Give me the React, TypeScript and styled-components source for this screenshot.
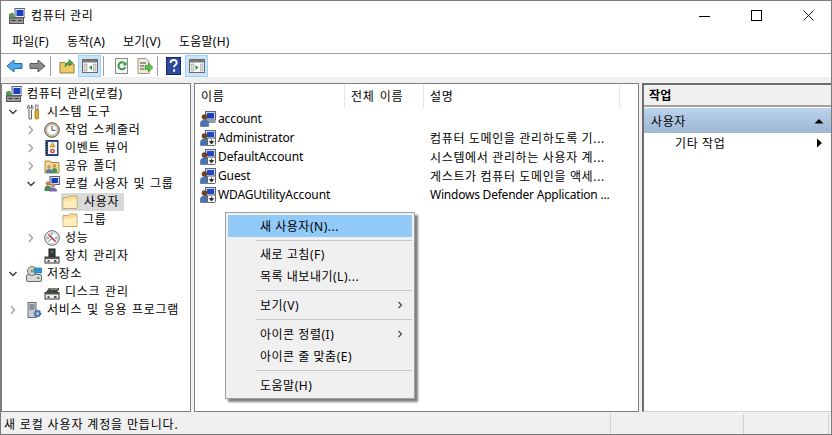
import React from "react";
import styled, { createGlobalStyle } from "styled-components";

const Global = createGlobalStyle`
  html, body { margin: 0; padding: 0; background: #fff; }
  body { font-family: "Noto Sans", "Noto Sans CJK KR", sans-serif; font-size: 12px; color: #000; overflow: hidden; }
  * { box-sizing: border-box; }
`;

const Win = styled.div`
  position: relative; width: 832px; height: 435px; border: 1px solid #7a7a7a; background: #f0f0f0;
  display: flex; flex-direction: column; overflow: hidden;
`;
const TitleBar = styled.div`
  height: 29px; background: #fff; display: flex; align-items: center; padding-left: 8px; gap: 6px; flex: none;
`;
const TitleText = styled.span`font-size: 12px; letter-spacing: .7px; flex: 1; padding-bottom: 2px;`;
const WinBtn = styled.div`
  width: 46px; height: 29px; display: flex; align-items: center; justify-content: center;
`;
const MenuBar = styled.div`
  height: 24px; background: #fff; display: flex; align-items: center; padding-left: 3px; border-bottom: 1px solid #a0a0a0; flex: none;
`;
const MenuLabel = styled.span<{ $w: number }>`width: ${p => p.$w}px; padding-left: 8px; padding-bottom: 2px; font-size: 12px; letter-spacing: .25px;`;
const Toolbar = styled.div`
  height: 23px; background: #fff; display: flex; align-items: center; padding-left: 2px; flex: none;
`;
const ToolBtn = styled.div<{ $w?: number; $on?: boolean }>`
  width: ${p => p.$w ?? 23}px; height: 22px; display: flex; align-items: center; justify-content: center; flex: none;
  background: ${p => (p.$on ? "#cce4f7" : "transparent")};
  border: 1px solid ${p => (p.$on ? "#99d1ff" : "transparent")};
`;
const ToolSep = styled.div<{ $l: number; $r: number }>`
  width: 1px; height: 20px; background: #a0a0a0; flex: none; margin: 0 ${p => p.$r}px 0 ${p => p.$l}px;
`;
const Content = styled.div`
  flex: 1; display: flex; padding-top: 6px; background: #f0f0f0; min-height: 0;
`;
const Panel = styled.div<{ $w: number }>`
  width: ${p => p.$w}px; background: #fff; border: 1px solid #7f7f7f; flex: none; overflow: hidden;
`;
const CenterPanel = styled(Panel)`margin-left: 3px;`;
const TreeList = styled.div`padding-top: 1px; display: flex; flex-direction: column;`;
const Row = styled.div`height: 18px; display: flex; align-items: center; padding-left: 4px; white-space: nowrap; letter-spacing: .72px; word-spacing: 1px;`;
const Indent = styled.div<{ $w: number }>`
  width: ${p => p.$w}px; height: 16px; flex: none; display: flex; align-items: center; justify-content: flex-end; padding-right: ${p => (p.$w ? 8 : 0)}px;
`;
const TreeLabel = styled.span<{ $sel?: boolean; $root?: boolean }>`
  margin-left: ${p => (p.$sel ? "0" : p.$root ? "5px" : "5px")};
  padding: ${p => (p.$sel ? "0 5px 0 6px" : "0")};
  line-height: 18px; height: 18px;
  background: ${p => (p.$sel ? "#d9d9d9" : "transparent")};
`;
const SelWrap = styled.div`display: flex; align-items: center; background: #d9d9d9; height: 18px; margin-left: -1px; padding-left: 1px;`;
const Header = styled.div`height: 24px; display: flex; align-items: center; background: #fff; letter-spacing: .7px; word-spacing: 1.5px;`;
const HCol = styled.div<{ $w: number; $line?: boolean }>`
  width: ${p => p.$w}px; height: 24px; padding-left: 6px; display: flex; align-items: center; flex: none;
  border-right: ${p => (p.$line ? "1px solid #e5e5e5" : "0")};
`;
const ListRows = styled.div`padding-top: 1px;`;
const LRow = styled.div`height: 19px; display: flex; align-items: center; white-space: nowrap;`;
const NameCell = styled.div`width: 235px; display: flex; align-items: center; gap: 2px; padding-left: 5px; flex: none; letter-spacing: -.12px;`;
const DescCell = styled.div<{ $latin?: boolean }>`letter-spacing: ${p => (p.$latin ? "-.22px" : ".65px")};`;
const ActHead = styled.div`
  height: 22px; background: #f0f0f0; border-bottom: 2px solid #a0a0a0; font-weight: 700; display: flex; align-items: center; padding-left: 5px; letter-spacing: .2px;
`;
const ActPanel = styled(Panel)`
  border-width: 2px 1px 1px 2px; border-color: #6d6d6d #a0a0a0 #d0d0d0 #6d6d6d; margin-left: 3px;
`;
const ActGroup = styled.div`
  height: 25px; background: linear-gradient(#bbd2ea, #9cb6d4); display: flex; align-items: center; justify-content: space-between;
  padding: 0 7px 0 7px; margin-top: 1px; letter-spacing: .6px;
`;
const ActRow = styled.div`
  height: 20px; display: flex; align-items: center; justify-content: space-between; padding: 0 7px 0 31px; letter-spacing: .6px;
`;
const Status = styled.div`
  height: 22px; flex: none; display: flex; align-items: center; background: #f0f0f0; padding-top: 1px; letter-spacing: .85px;
`;
const StatusCell = styled.div<{ $w: number; $line?: boolean }>`
  width: ${p => p.$w}px; height: 20px; padding-left: 3px; display: flex; align-items: center; flex: none;
  border-right: ${p => (p.$line ? "1px solid #d0d0d0" : "0")};
`;
const Ctx = styled.div`
  position: absolute; left: 224px; top: 211px; width: 190px; background: #f0f0f0; border: 1px solid #a0a0a0;
  padding: 2px; box-shadow: 3px 3px 2px #808080; letter-spacing: .52px;
`;
const CtxItem = styled.div<{ $on?: boolean }>`
  height: 22px; display: flex; align-items: center; justify-content: space-between; padding: 0 9px 1px 32px;
  background: ${p => (p.$on ? "#91c9f7" : "transparent")};
`;
const CtxSep = styled.div<{ $h?: number }>`
  height: ${p => p.$h ?? 7}px; display: flex; align-items: center; padding-left: 28px;
  &::after { content: ""; flex: 1; height: 1px; background: #c8c8c8; }
`;

/* ---------- drawings ---------- */
const S: React.FC<{ w?: number; h?: number; children: React.ReactNode }> = ({ w = 16, h = 16, children }) => (
  <svg width={w} height={h} viewBox={`0 0 ${w} ${h}`} style={{ flex: "none", display: "block" }}>{children}</svg>
);

const Computer = () => (
  <S>
    <rect x="6" y="0.500" width="10" height="9" fill="#e6eaf0" stroke="#5a6478" />
    <rect x="7.500" y="2" width="7" height="6" fill="#1c3fc0" />
    <path d="M0.500 6l3.500-1 1.500 5H0.500z" fill="#46a24a" stroke="#3a6a40" strokeWidth=".5" />
    <rect x="0.500" y="10" width="14" height="5.500" fill="#9a9a9a" stroke="#555" />
    <path d="M2.500 12.500h4M9 12.500h3.500" stroke="#333" />
  </S>
);
const Tools = () => (
  <S>
    <path d="M3 1c-2 1-2 4 0 5v9h2.500V6c2-1 2-4 0-5v3H3z" fill="#f2f2f2" stroke="#666" />
    <rect x="9.500" y="1" width="2.500" height="5" fill="#dcdcdc" stroke="#666" strokeWidth=".7" />
    <rect x="9" y="6" width="3.500" height="9" rx="1" fill="#e4b31c" stroke="#8a6a10" strokeWidth=".7" />
  </S>
);
const Clock = () => (
  <S>
    <circle cx="8" cy="8" r="7.300" fill="#d8c9a0" stroke="#555" />
    <circle cx="8" cy="8" r="5.300" fill="#fff" stroke="#999" strokeWidth=".6" />
    <path d="M8 4v4.300h3.500" stroke="#444" strokeWidth="1" fill="none" />
  </S>
);
const LogBook = () => (
  <S>
    <rect x="2" y="0.500" width="12" height="15" fill="#2f5790" stroke="#1f3a66" />
    <rect x="4" y="2" width="9" height="12" fill="#f4f4f4" />
    <path d="M1 3h3M1 5.500h3M1 8h3M1 10.500h3M1 13h3" stroke="#333" />
    <path d="M8.500 2.500l2.500 4.500H6z" fill="#f0c020" stroke="#8a6a10" strokeWidth=".5" />
    <circle cx="8.500" cy="11" r="2.300" fill="#c8323c" />
    <circle cx="8.500" cy="11" r=".9" fill="#fff" />
  </S>
);
const SharedFolder = () => (
  <S>
    <path d="M1 3h5l1 1.500h8V15H1z" fill="#f2d98c" stroke="#a88a40" />
    <circle cx="5" cy="9" r="1.800" fill="#c89060" />
    <path d="M2 15v-2c0-1 1.500-2 3-2s3 1 3 2v2z" fill="#4a7ab8" />
    <circle cx="10.500" cy="8" r="1.800" fill="#c89060" />
    <path d="M8 15v-3c0-1 1-2 2.500-2s2.500 1 2.500 2v3z" fill="#3f9a58" />
  </S>
);
const Users = () => (
  <S>
    <rect x="6" y="0.500" width="9.500" height="8" fill="#dfe5ee" stroke="#5a6478" />
    <rect x="7.500" y="2" width="6.500" height="5" fill="#1c3fc0" />
    <circle cx="4" cy="7.500" r="2.300" fill="#b8824e" />
    <path d="M0.500 15v-2.500c0-1.500 1.500-2.700 3.500-2.700s3.500 1.200 3.500 2.700V15z" fill="#4f8a50" />
    <circle cx="9" cy="9.500" r="2.200" fill="#c89060" />
    <path d="M5 15.500V14c0-1.300 1.800-2.300 4-2.300s4 1 4 2.300v1.500z" fill="#7a6ab0" />
  </S>
);
const Folder = () => (
  <S>
    <path d="M1 3.500V14.500h14V2H7.500L6 3.500z" fill="#f8dc94" stroke="#c0a870" />
    <path d="M1.500 6.500h8L11 5h3.500V14h-13z" fill="#fdeebc" />
  </S>
);
const Perf = () => (
  <S>
    <circle cx="8" cy="8" r="7.300" fill="#f4f4f4" stroke="#666" />
    <circle cx="8" cy="8" r="5.500" fill="#fff" stroke="#aaa" strokeWidth=".6" />
    <path d="M4.500 4.500l7 7" stroke="#c8282c" strokeWidth="1.600" />
    <path d="M8 3v2M3 8h2M13 8h-2" stroke="#2f6ab0" strokeWidth="1" />
    <path d="M4.500 11l3-2" stroke="#2f8a50" strokeWidth="1" />
  </S>
);
const Device = () => (
  <S>
    <rect x="5" y="1" width="6" height="8" fill="#3a3a3a" stroke="#222" />
    <rect x="7.500" y="3" width="1.500" height="1.500" fill="#4ecb60" />
    <rect x="1" y="9" width="14" height="6" fill="#f0f0f0" stroke="#333" />
    <rect x="1" y="9" width="14" height="2" fill="#555" />
    <path d="M3.500 13h2M10 13h2.500" stroke="#222" strokeWidth="1.400" />
  </S>
);
const Storage = () => (
  <S>
    <rect x="0.500" y="8.500" width="15" height="7" rx="1.500" fill="#d8dcd8" stroke="#6a6a6a" />
    <rect x="11" y="11" width="2.500" height="2" fill="#5a9a5a" />
    <circle cx="6" cy="5" r="4.500" fill="#cfd4d0" stroke="#6a6a6a" />
    <circle cx="6" cy="5" r="1.500" fill="#8a9a50" />
    <rect x="8" y="2" width="8" height="5" rx="1" fill="#2f95d0" stroke="#1c6a98" strokeWidth=".6" />
  </S>
);
const Disk = () => (
  <S>
    <path d="M2 8l3-4h10v2l-2 2z" fill="#444" />
    <path d="M6 5h8" stroke="#9ed09a" />
    <rect x="1" y="8.500" width="14" height="6.500" fill="#f0f0f0" stroke="#333" />
    <rect x="1" y="8.500" width="14" height="2" fill="#555" />
    <path d="M3.500 13h2M10 13h2.500" stroke="#222" strokeWidth="1.400" />
  </S>
);
const Services = () => (
  <S>
    <rect x="2" y="0.500" width="8" height="15" fill="#c8ccd4" stroke="#6a7080" />
    <path d="M3.500 3h5M3.500 5h5M3.500 7h5" stroke="#4a5060" />
    <circle cx="11.500" cy="11.500" r="3" fill="#5f8cc8" stroke="#3a5f98" strokeDasharray="1.500 .7" strokeWidth="1.500" />
    <circle cx="11.500" cy="11.500" r="1" fill="#fff" />
  </S>
);
const UserPlain = () => (
  <S>
    <rect x="5.500" y="0.500" width="10" height="8.500" fill="#cfd6e0" stroke="#5a6478" />
    <rect x="7" y="2" width="7" height="5.500" fill="#1c3fc0" />
    <rect x="7" y="9.500" width="8.500" height="2.500" fill="#8b95a5" />
    <circle cx="4.500" cy="6" r="2.800" fill="#6e4520" />
    <path d="M0.500 15.500v-3.500c0-1.800 1.800-3 4-3s4 1.200 4 3v3.500z" fill="#4a74b0" stroke="#2a4a80" strokeWidth=".5" />
  </S>
);
const UserDown = () => (
  <S>
    <rect x="5.500" y="0.500" width="10" height="8" fill="#cfd6e0" stroke="#5a6478" />
    <rect x="7" y="2" width="7" height="5" fill="#2248c8" />
    <circle cx="4.500" cy="6" r="2.800" fill="#6e4520" />
    <path d="M0.500 15.500v-3.500c0-1.800 1.800-3 4-3s4 1.200 4 3v3.500z" fill="#4a74b0" stroke="#2a4a80" strokeWidth=".5" />
    <rect x="7.500" y="8" width="8" height="7.500" rx="1" fill="#f4f4f4" stroke="#666" />
    <path d="M11.500 9.500v3M9.500 11.500h4l-2 2.500z" fill="#222" stroke="#222" strokeWidth=".8" />
  </S>
);
const Chev: React.FC<{ open?: boolean }> = ({ open }) => (
  <S w={10} h={10}>
    {open
      ? <path d="M1.500 3l3.500 3.500L8.500 3" fill="none" stroke="#404040" strokeWidth="1.500" />
      : <path d="M3 1l3.500 4L3 9" fill="none" stroke="#a6a6a6" strokeWidth="1.500" />}
  </S>
);
const Back = () => (
  <S w={17} h={14}>
    <path d="M8 1L1 7l7 6V9.500h8v-5H8z" fill="#4ea8ea" stroke="#1c6cb0" />
  </S>
);
const Fwd = () => (
  <S w={17} h={14}>
    <path d="M9 1l7 6-7 6V9.500H1v-5h8z" fill="#8c8c8c" stroke="#555" />
  </S>
);
const UpFolder = () => (
  <S h={16}>
    <path d="M1 4.500h5l1 1.500h8v9H1z" fill="#eccb6a" stroke="#9a7a30" />
    <path d="M6 9c0-3 2-5 4-5V1.500L14 5l-4 3V6C8 6 7 7.500 6 9z" fill="#4ea24a" stroke="#2a6a30" strokeWidth=".6" />
  </S>
);
const PaneIcon: React.FC<{ arrowLeft?: boolean }> = ({ arrowLeft }) => (
  <S>
    <rect x="0.500" y="1.500" width="15" height="13" fill="#fff" stroke="#6a6a6a" />
    <rect x="1" y="2" width="14" height="2.500" fill="#7a7a7a" />
    <path d="M2 6h3v7H2z" fill="#dcdcdc" stroke="#999" strokeWidth=".6" />
    <path d="M11.500 6h2.500v7h-2.500z" fill="#dcdcdc" stroke="#999" strokeWidth=".6" />
    {arrowLeft
      ? <path d="M10 7v5L7 9.500z" fill="#2f9a40" />
      : <path d="M6.500 7v5l3-2.500z" fill="#2f9a40" />}
  </S>
);
const Refresh = () => (
  <S>
    <rect x="1.500" y="0.500" width="12" height="15" fill="#f6f6f6" stroke="#8a8a8a" />
    <path d="M11 6a3.500 3.500 0 1 0 .3 3" fill="none" stroke="#3f9a48" strokeWidth="2" />
    <path d="M12.500 3.500v4h-4z" fill="#3f9a48" />
  </S>
);
const ExportIcon = () => (
  <S>
    <path d="M1 .5h8l3 3V15.500H1z" fill="#f0ead8" stroke="#9a9480" />
    <path d="M3 5h6M3 8h4M3 11h4" stroke="#4a4a4a" />
    <path d="M8 7.500h3.500V5L16 9.500 11.500 14v-2.500H8z" fill="#5ec04a" stroke="#2f7a30" strokeWidth=".6" />
  </S>
);
const Help = () => (
  <svg width="15" height="18" viewBox="0 0 15 18" style={{ display: "block" }}>
    <rect x="0.500" y="0.500" width="14" height="17" fill="#2f4a9a" stroke="#16286a" />
    <path d="M4.500 6c0-2 1.300-3 3.200-3s3 1.100 3 2.700c0 2.300-2.700 2.300-2.700 4.600" fill="none" stroke="#fff" strokeWidth="1.800" />
    <rect x="7" y="12.500" width="2.200" height="2.200" fill="#fff" />
  </svg>
);

type Node = { l: number; t: string; I: React.FC; c?: "o" | "c"; sel?: boolean };
const tree: Node[] = [
  { l: 0, t: "컴퓨터 관리(로컬)", I: Computer },
  { l: 1, t: "시스템 도구", I: Tools, c: "o" },
  { l: 2, t: "작업 스케줄러", I: Clock, c: "c" },
  { l: 2, t: "이벤트 뷰어", I: LogBook, c: "c" },
  { l: 2, t: "공유 폴더", I: SharedFolder, c: "c" },
  { l: 2, t: "로컬 사용자 및 그룹", I: Users, c: "o" },
  { l: 3, t: "사용자", I: Folder, sel: true },
  { l: 3, t: "그룹", I: Folder },
  { l: 2, t: "성능", I: Perf, c: "c" },
  { l: 2, t: "장치 관리자", I: Device },
  { l: 1, t: "저장소", I: Storage, c: "o" },
  { l: 2, t: "디스크 관리", I: Disk },
  { l: 1, t: "서비스 및 응용 프로그램", I: Services, c: "c" },
];

const users = [
  { n: "account", d: "", I: UserPlain },
  { n: "Administrator", d: "컴퓨터 도메인을 관리하도록 기...", I: UserDown },
  { n: "DefaultAccount", d: "시스템에서 관리하는 사용자 계...", I: UserDown },
  { n: "Guest", d: "게스트가 컴퓨터 도메인을 액세...", I: UserDown },
  { n: "WDAGUtilityAccount", d: "Windows Defender Application ...", I: UserDown, latin: true },
];

const Triangle: React.FC<{ up?: boolean }> = ({ up }) => (
  <S w={10} h={10}>
    {up ? <path d="M0.500 7.500L5 3l4.500 4.500z" fill="#000" /> : <path d="M3 0.500L8 5l-5 4.500z" fill="#000" />}
  </S>
);
const SubArrow = () => (
  <S w={6} h={8}><path d="M1.500 1L4.500 4 1.500 7" fill="none" stroke="#404040" strokeWidth="1.100" /></S>
);

export default function App() {
  return (
    <Win>
      <Global />
      <TitleBar>
        <Computer />
        <TitleText>컴퓨터 관리</TitleText>
        <WinBtn><S w={11} h={11}><path d="M0 6.500h11" stroke="#000" /></S></WinBtn>
        <WinBtn><S w={11} h={11}><rect x=".5" y=".5" width="10" height="10" fill="none" stroke="#000" /></S></WinBtn>
        <WinBtn><S w={11} h={11}><path d="M.5.500l10 10M10.500.500l-10 10" stroke="#000" strokeWidth=".9" /></S></WinBtn>
      </TitleBar>
      <MenuBar>
        <MenuLabel $w={55}>파일(F)</MenuLabel>
        <MenuLabel $w={56}>동작(A)</MenuLabel>
        <MenuLabel $w={56}>보기(V)</MenuLabel>
        <MenuLabel $w={70}>도움말(H)</MenuLabel>
      </MenuBar>
      <Toolbar>
        <ToolBtn><Back /></ToolBtn>
        <ToolBtn $w={22}><Fwd /></ToolBtn>
        <ToolSep $l={2} $r={4} />
        <ToolBtn><UpFolder /></ToolBtn>
        <ToolBtn $on><PaneIcon arrowLeft /></ToolBtn>
        <ToolSep $l={2} $r={6} />
        <ToolBtn><Refresh /></ToolBtn>
        <ToolBtn><ExportIcon /></ToolBtn>
        <ToolSep $l={1} $r={4} />
        <ToolBtn><Help /></ToolBtn>
        <ToolBtn $on><PaneIcon /></ToolBtn>
      </Toolbar>
      <Content>
        <Panel $w={190}>
          <TreeList>
            {tree.map(n => (
              <Row key={n.t}>
                <Indent $w={n.l === 0 ? 0 : 18 * n.l + 2}>
                  {n.c && <Chev open={n.c === "o"} />}
                </Indent>
                {n.sel ? (
                  <SelWrap><n.I /><TreeLabel $sel>{n.t}</TreeLabel></SelWrap>
                ) : (
                  <><n.I /><TreeLabel>{n.t}</TreeLabel></>
                )}
              </Row>
            ))}
          </TreeList>
        </Panel>
        <CenterPanel $w={445}>
          <Header>
            <HCol $w={150} $line>이름</HCol>
            <HCol $w={79} $line>전체 이름</HCol>
            <HCol $w={196} $line>설명</HCol>
          </Header>
          <ListRows>
            {users.map(u => (
              <LRow key={u.n}>
                <NameCell><u.I />{u.n}</NameCell>
                <DescCell $latin={u.latin}>{u.d}</DescCell>
              </LRow>
            ))}
          </ListRows>
        </CenterPanel>
        <ActPanel $w={190}>
          <ActHead>작업</ActHead>
          <ActGroup>사용자<Triangle up /></ActGroup>
          <ActRow>기타 작업<Triangle /></ActRow>
        </ActPanel>
      </Content>
      <Status>
        <StatusCell $w={610} $line>새 로컬 사용자 계정을 만듭니다.</StatusCell>
        <StatusCell $w={133} $line />
        <StatusCell $w={85} $line />
      </Status>
      <Ctx>
        <CtxItem $on>새 사용자(N)...</CtxItem>
        <CtxSep $h={6} />
        <CtxItem>새로 고침(F)</CtxItem>
        <CtxItem>목록 내보내기(L)...</CtxItem>
        <CtxSep />
        <CtxItem>보기(V)<SubArrow /></CtxItem>
        <CtxSep />
        <CtxItem>아이콘 정렬(I)<SubArrow /></CtxItem>
        <CtxItem>아이콘 줄 맞춤(E)</CtxItem>
        <CtxSep />
        <CtxItem>도움말(H)</CtxItem>
      </Ctx>
    </Win>
  );
}
